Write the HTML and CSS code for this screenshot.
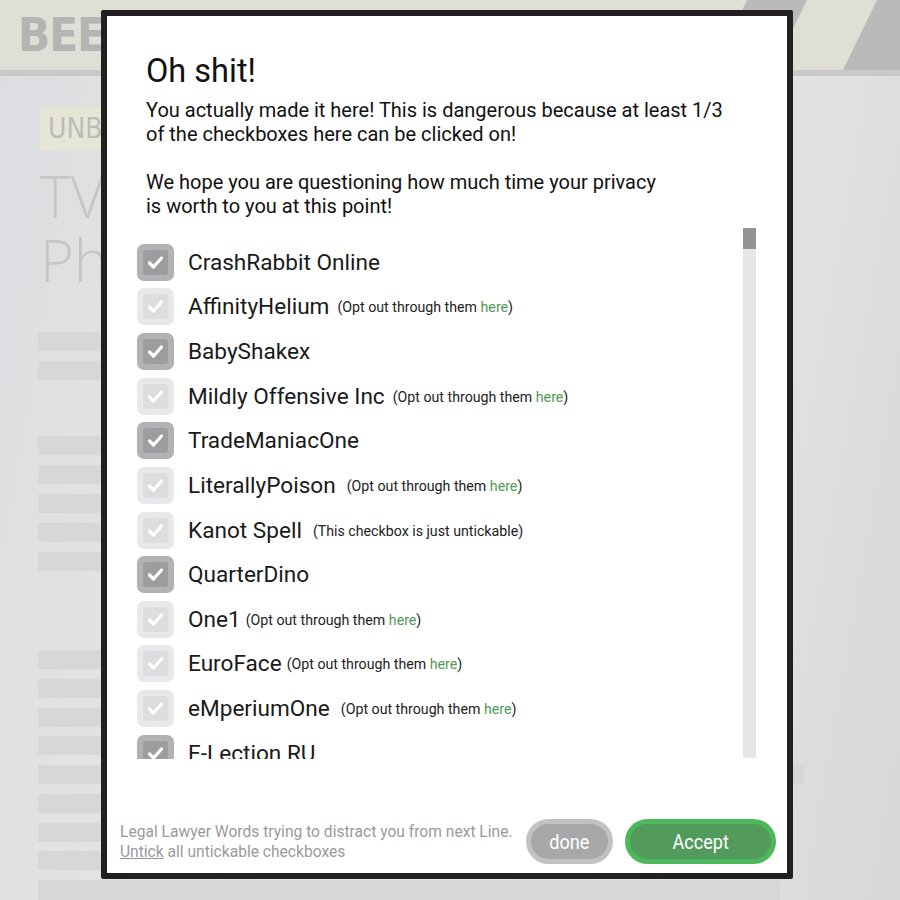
FILE: index.html
```html
<!DOCTYPE html>
<html lang="en">
<head>
<meta charset="utf-8">
<title>Oh shit!</title>
<link rel="stylesheet" href="styles.css">
</head>
<body>
<div class="page">
  <header class="band">
    <span class="logo">BEEF</span>
    <svg class="stripes" width="160" height="70" viewBox="0 0 160 70">
      <polygon points="7,0 67,0 33,70 -27,70" fill="#bababa"/>
      <polygon points="137,0 160,0 160,70 103,70" fill="#bababa"/>
    </svg>
  </header>
  <main class="content">
    <div class="tag">UNBOXING</div>
    <div class="headline">TV Review<br>Phones</div>
    <div class="bars g1">
      <div class="bar"></div><div class="bar"></div>
    </div>
    <div class="bars g2">
      <div class="bar"></div><div class="bar"></div><div class="bar"></div><div class="bar"></div><div class="bar"></div>
    </div>
    <div class="bars g3">
      <div class="bar"></div><div class="bar"></div><div class="bar"></div><div class="bar"></div>
      <div class="bar bar-long"></div>
      <div class="bar"></div><div class="bar"></div><div class="bar"></div>
      <div class="bar bar-bottom"></div>
    </div>
  </main>
</div>

<div class="modal">
  <div class="modal-head">
    <h1 class="title">Oh shit!</h1>
    <p class="intro">You actually made it here! This is dangerous because at least 1/3<br>of the checkboxes here can be clicked on!<br><br>We hope you are questioning how much time your privacy<br>is worth to you at this point!</p>
  </div>

  <div class="list-area">
    <ul class="list">
      <li class="row"><span class="box dark"><svg viewBox="0 0 37 37"><rect class="o" width="37" height="37" rx="7"/><rect class="i" x="6" y="6" width="25" height="25" rx="3"/><polyline points="12.5,19 16.5,23 24.5,14" /></svg></span><span class="name">CrashRabbit Online</span></li>
      <li class="row"><span class="box light"><svg viewBox="0 0 37 37"><rect class="o" width="37" height="37" rx="7"/><rect class="i" x="6" y="6" width="25" height="25" rx="3"/><polyline points="12.5,19 16.5,23 24.5,14" /></svg></span><span class="name">AffinityHelium</span><span class="note gap-m">(Opt out through them <a class="here">here</a>)</span></li>
      <li class="row"><span class="box dark"><svg viewBox="0 0 37 37"><rect class="o" width="37" height="37" rx="7"/><rect class="i" x="6" y="6" width="25" height="25" rx="3"/><polyline points="12.5,19 16.5,23 24.5,14" /></svg></span><span class="name">BabyShakex</span></li>
      <li class="row"><span class="box light"><svg viewBox="0 0 37 37"><rect class="o" width="37" height="37" rx="7"/><rect class="i" x="6" y="6" width="25" height="25" rx="3"/><polyline points="12.5,19 16.5,23 24.5,14" /></svg></span><span class="name">Mildly Offensive Inc</span><span class="note gap-m">(Opt out through them <a class="here">here</a>)</span></li>
      <li class="row"><span class="box dark"><svg viewBox="0 0 37 37"><rect class="o" width="37" height="37" rx="7"/><rect class="i" x="6" y="6" width="25" height="25" rx="3"/><polyline points="12.5,19 16.5,23 24.5,14" /></svg></span><span class="name">TradeManiacOne</span></li>
      <li class="row"><span class="box light"><svg viewBox="0 0 37 37"><rect class="o" width="37" height="37" rx="7"/><rect class="i" x="6" y="6" width="25" height="25" rx="3"/><polyline points="12.5,19 16.5,23 24.5,14" /></svg></span><span class="name">LiterallyPoison</span><span class="note gap-l">(Opt out through them <a class="here">here</a>)</span></li>
      <li class="row"><span class="box light"><svg viewBox="0 0 37 37"><rect class="o" width="37" height="37" rx="7"/><rect class="i" x="6" y="6" width="25" height="25" rx="3"/><polyline points="12.5,19 16.5,23 24.5,14" /></svg></span><span class="name">Kanot Spell</span><span class="note gap-l">(This checkbox is just untickable)</span></li>
      <li class="row"><span class="box dark"><svg viewBox="0 0 37 37"><rect class="o" width="37" height="37" rx="7"/><rect class="i" x="6" y="6" width="25" height="25" rx="3"/><polyline points="12.5,19 16.5,23 24.5,14" /></svg></span><span class="name">QuarterDino</span></li>
      <li class="row"><span class="box light"><svg viewBox="0 0 37 37"><rect class="o" width="37" height="37" rx="7"/><rect class="i" x="6" y="6" width="25" height="25" rx="3"/><polyline points="12.5,19 16.5,23 24.5,14" /></svg></span><span class="name">One1</span><span class="note gap-s">(Opt out through them <a class="here">here</a>)</span></li>
      <li class="row"><span class="box light"><svg viewBox="0 0 37 37"><rect class="o" width="37" height="37" rx="7"/><rect class="i" x="6" y="6" width="25" height="25" rx="3"/><polyline points="12.5,19 16.5,23 24.5,14" /></svg></span><span class="name">EuroFace</span><span class="note gap-s">(Opt out through them <a class="here">here</a>)</span></li>
      <li class="row"><span class="box light"><svg viewBox="0 0 37 37"><rect class="o" width="37" height="37" rx="7"/><rect class="i" x="6" y="6" width="25" height="25" rx="3"/><polyline points="12.5,19 16.5,23 24.5,14" /></svg></span><span class="name">eMperiumOne</span><span class="note gap-l">(Opt out through them <a class="here">here</a>)</span></li>
      <li class="row"><span class="box dark"><svg viewBox="0 0 37 37"><rect class="o" width="37" height="37" rx="7"/><rect class="i" x="6" y="6" width="25" height="25" rx="3"/><polyline points="12.5,19 16.5,23 24.5,14" /></svg></span><span class="name">E-Lection RU</span></li>
    </ul>
    <div class="scrollbar"><div class="thumb"></div></div>
  </div>

  <footer class="modal-foot">
    <p class="legal">Legal Lawyer Words trying to distract you from next Line.<br><span class="untick">Untick</span> all untickable checkboxes</p>
    <div class="actions">
      <button class="btn btn-done"><span class="btn-label">done</span></button>
      <button class="btn btn-accept"><span class="btn-label">Accept</span></button>
    </div>
  </footer>
</div>
</body>
</html>
```

FILE: styles.css
```css
* { box-sizing: border-box; }

html, body {
  margin: 0;
  padding: 0;
}

body {
  width: 900px;
  height: 900px;
  overflow: hidden;
  position: relative;
  font-family: Roboto, "Liberation Sans", sans-serif;
  background: #e3e4e6;
}

/* ---------- background page ---------- */
.page {
  width: 900px;
  height: 900px;
  background: linear-gradient(100deg, #dcdde0 0%, #e8e8e9 45%, #e6e6e7 70%, #d6d7d9 100%);
}

.band {
  height: 76px;
  background: #dfdfd6;
  border-bottom: 6px solid #c9c9c9;
  display: flex;
  justify-content: space-between;
  align-items: flex-start;
}

.logo {
  font-family: "DejaVu Sans Condensed", "DejaVu Sans", sans-serif;
  font-weight: bold;
  font-size: 47px;
  line-height: 1;
  color: #b4b4b2;
  margin: 11px 0 0 18px;
  letter-spacing: -1px;
}

.stripes { display: block; }

.content {
  padding-left: 38px;
}

.tag {
  margin: 31px 0 0 2px;
  width: 200px;
  height: 43px;
  background: #e6e6d6;
  color: #bcbcb8;
  font-family: "DejaVu Sans Condensed", "DejaVu Sans", sans-serif;
  font-size: 28px;
  line-height: 43px;
  padding-left: 8px;
  white-space: nowrap;
}

.headline {
  margin: 14px 0 0 2px;
  font-family: "Open Sans", sans-serif;
  font-weight: 300;
  font-size: 58px;
  line-height: 64px;
  color: #c6c6c8;
  white-space: nowrap;
}

.bars {
  display: flex;
  flex-direction: column;
  gap: 10px;
}

.bar {
  width: 700px;
  height: 19px;
  background: #d6d7d9;
}

.g1 { margin-top: 40px; }
.g2 { margin-top: 56px; }
.g3 { margin-top: 79px; gap: 9.75px; }

.bar-long { width: 766px; }
.bar-bottom { width: 742px; height: 22px; }

/* ---------- modal ---------- */
.modal {
  position: absolute;
  left: 101px;
  top: 10px;
  width: 692px;
  height: 869px;
  background: #ffffff;
  border: 6px solid #231f20;
  border-radius: 2px;
  display: flex;
  flex-direction: column;
}

.modal-head {
  padding: 37px 39px 0 39px;
}

.title {
  margin: 0;
  font-size: 32.5px;
  font-weight: 400;
  line-height: 36px;
  color: #111111;
}

.intro {
  margin: 9px 0 0 0;
  font-size: 20px;
  line-height: 24px;
  color: #111111;
  white-space: nowrap;
}

.list-area {
  margin-top: 10px;
  height: 531px;
  display: flex;
  overflow: hidden;
}

.list {
  list-style: none;
  margin: 0;
  padding: 12px 0 0 30px;
  flex: 1;
  overflow: hidden;
}

.row {
  height: 44.64px;
  display: flex;
  align-items: center;
  white-space: nowrap;
}

.box {
  width: 37px;
  height: 37px;
  flex: none;
  margin-right: 14px;
}

.box svg {
  display: block;
  width: 37px;
  height: 37px;
}

.box polyline {
  fill: none;
  stroke: #ffffff;
  stroke-width: 3.2;
  stroke-linecap: round;
  stroke-linejoin: round;
}

.box.dark .o { fill: #b2b2b4; }
.box.dark .i { fill: #9d9d9f; }
.box.light .o { fill: #e8e8ea; }
.box.light .i { fill: #dddddf; }

.name {
  font-size: 22.6px;
  color: #1a1a1a;
  line-height: 27px;
}

.note {
  font-size: 14.2px;
  color: #222222;
  align-self: center;
  padding-top: 1px;
}

.gap-s { margin-left: 5px; }
.gap-m { margin-left: 8px; }
.gap-l { margin-left: 11px; }

.here {
  color: #4f9a55;
  text-decoration: none;
}

.scrollbar {
  width: 13px;
  height: 530px;
  margin-right: 31px;
  background: #e6e6e8;
  flex: none;
}

.thumb {
  height: 21px;
  background: #939393;
}

/* ---------- footer ---------- */
.modal-foot {
  margin-top: auto;
  display: flex;
  align-items: center;
  padding: 0 11px 9px 13px;
}

.legal {
  flex: 1;
  margin: 0;
  font-size: 15.6px;
  line-height: 20px;
  color: #9a9a9c;
  white-space: nowrap;
}

.untick {
  text-decoration: underline;
}

.actions {
  display: flex;
  gap: 12px;
}

.btn {
  height: 45px;
  border-radius: 23px;
  border: 5px solid;
  color: #ffffff;
  font-family: Roboto, sans-serif;
  font-size: 21px;
  padding: 0;
  display: flex;
  align-items: center;
  justify-content: center;
}

.btn-label {
  display: inline-block;
  transform: scaleX(0.86);
}

.btn-done {
  width: 87px;
  background: #a8a8aa;
  border-color: #c2c2c4;
}

.btn-accept {
  width: 151px;
  background: #529b5c;
  border-color: #4db85b;
}
```
